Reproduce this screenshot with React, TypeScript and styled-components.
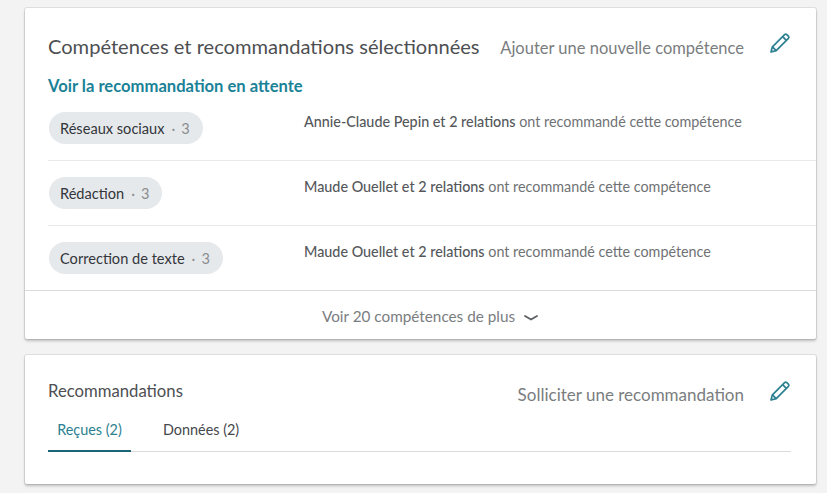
import React from "react";
import styled, { createGlobalStyle } from "styled-components";

const Global = createGlobalStyle`
  html, body { margin: 0; padding: 0; background: #f3f3f3; }
  body { font-family: "Lato", "Open Sans", sans-serif; }
  #root { width: 827px; height: 493px; overflow: hidden; }
`;

const Page = styled.div`
  display: flex;
  flex-direction: column;
  gap: 16px;
  padding: 8px 11px 0 25px;
`;

const Card = styled.section`
  width: 791px;
  box-sizing: border-box;
  background: #fff;
  border-radius: 2px;
  box-shadow: 0 0 0 1px rgba(0, 0, 0, 0.08), 0 2px 3px rgba(0, 0, 0, 0.22);
`;

const Header = styled.header<{ $top: number; $height: number }>`
  display: flex;
  align-items: center;
  box-sizing: border-box;
  height: ${(p) => p.$height}px;
  padding: ${(p) => p.$top}px 25px 0 23px;
`;

const Title = styled.h2<{ $size: number; $lift: number }>`
  margin: 0 0 ${(p) => p.$lift}px;
  flex: 1;
  font-size: ${(p) => p.$size}px;
  font-weight: 400;
  color: #4d4f52;
  white-space: nowrap;
`;

const AddLabel = styled.span<{ $size: number; $drop: number }>`
  font-size: ${(p) => p.$size}px;
  color: #7a7d80;
  margin: ${(p) => p.$drop}px 25px 0 0;
  white-space: nowrap;
`;

const PencilSlot = styled.span<{ $lift: number }>`
  display: flex;
  margin-bottom: ${(p) => p.$lift}px;
`;

const PendingLink = styled.a`
  display: block;
  margin: 0 0 0 23px;
  height: 20px;
  line-height: 20px;
  font-size: 16.6px;
  font-weight: 700;
  color: #1a8297;
`;

const SkillRow = styled.div<{ $inset: boolean }>`
  display: flex;
  align-items: flex-start;
  height: 65px;
  box-sizing: border-box;
  padding-top: 16px;
  margin-left: ${(p) => (p.$inset ? 23 : 0)}px;
  padding-left: ${(p) => (p.$inset ? 0 : 23)}px;
  border-bottom: 1px solid ${(p) => (p.$inset ? "#e8e9ea" : "#d9dadb")};
`;

const SkillCell = styled.div`
  width: 256px;
  flex: none;
`;

const Pill = styled.span`
  display: inline-flex;
  align-items: center;
  height: 32px;
  margin-left: 1px;
  padding: 0 13px 0 11px;
  border-radius: 16px;
  background: #e6e9ec;
  font-size: 14.6px;
  color: #33363a;
  white-space: nowrap;
`;

const Count = styled.span`
  color: #8b8e91;
  margin-left: 7px;
  &::before { content: "·"; margin-right: 6px; }
`;

const Endorsement = styled.p`
  margin: 0;
  line-height: 20px;
  font-size: 14.35px;
  color: #6f7275;
  white-space: nowrap;
`;

const Strong = styled.span`
  color: #55585b;
  font-weight: 500;
`;

const Footer = styled.button`
  display: flex;
  align-items: center;
  justify-content: center;
  gap: 8px;
  box-sizing: border-box;
  width: 100%;
  height: 48px;
  padding: 1px 0 0 20px;
  border: 0;
  background: none;
  font-family: inherit;
  font-size: 15.3px;
  color: #7a7d80;
`;

const ChevronSlot = styled.span`
  display: flex;
  margin-top: 4px;
`;

const Tabs = styled.nav`
  display: flex;
  margin: 2px 25px 0 23px;
  height: 35px;
  box-sizing: border-box;
  border-bottom: 1px solid #d9dadb;
`;

const Tab = styled.a<{ $active?: boolean }>`
  box-sizing: border-box;
  width: ${(p) => (p.$active ? 83 : 110)}px;
  height: 35px;
  padding: 0 ${(p) => (p.$active ? 8 : 32)}px;
  line-height: 26px;
  font-size: 14.4px;
  white-space: nowrap;
  color: ${(p) => (p.$active ? "#2c7f91" : "#45484b")};
  text-align: ${(p) => (p.$active ? "center" : "left")};
  border-bottom: ${(p) => (p.$active ? "2px solid #1c6478" : "none")};
`;

const Spacer = styled.div`
  height: 32px;
`;

const Pencil = () => (
  <svg width="22" height="22" viewBox="0 0 22 22" fill="none" stroke="#2c7f91" strokeWidth="1.7" strokeLinejoin="round">
    <path d="M2 20l1.4-5.2L15.6 2.6a1.6 1.6 0 0 1 2.2 0l1.6 1.6a1.6 1.6 0 0 1 0 2.2L7.2 18.6 2 20z" />
    <path d="M13.6 4.6l3.8 3.8M3.4 14.8l3.8 3.8" />
  </svg>
);

const Chevron = () => (
  <svg width="16" height="8" viewBox="0 0 16 8" fill="none" stroke="#5e6164" strokeWidth="1.8" strokeLinecap="round" strokeLinejoin="round">
    <path d="M2 2l6 3.6L14 2" />
  </svg>
);

const skills = [
  { name: "Réseaux sociaux", who: "Annie-Claude Pepin et 2 relations" },
  { name: "Rédaction", who: "Maude Ouellet et 2 relations" },
  { name: "Correction de texte", who: "Maude Ouellet et 2 relations" },
];

export default function App() {
  return (
    <>
      <Global />
      <Page>
        <Card>
          <Header $top={10} $height={68}>
            <Title $size={20.1} $lift={2}>Compétences et recommandations sélectionnées</Title>
            <AddLabel $size={16.5} $drop={2}>Ajouter une nouvelle compétence</AddLabel>
            <PencilSlot $lift={8}>
              <Pencil />
            </PencilSlot>
          </Header>
          <PendingLink>Voir la recommandation en attente</PendingLink>
          {skills.map((s, i) => (
            <SkillRow key={s.name} $inset={i < 2}>
              <SkillCell>
                <Pill>
                  {s.name}
                  <Count>3</Count>
                </Pill>
              </SkillCell>
              <Endorsement>
                <Strong>{s.who}</Strong> ont recommandé cette compétence
              </Endorsement>
            </SkillRow>
          ))}
          <Footer>
            Voir 20 compétences de plus
            <ChevronSlot>
              <Chevron />
            </ChevronSlot>
          </Footer>
        </Card>
        <Card>
          <Header $top={12} $height={60}>
            <Title $size={16.7} $lift={0}>Recommandations</Title>
            <AddLabel $size={17} $drop={6}>Solliciter une recommandation</AddLabel>
            <PencilSlot $lift={0}>
              <Pencil />
            </PencilSlot>
          </Header>
          <Tabs>
            <Tab $active>Reçues (2)</Tab>
            <Tab>Données (2)</Tab>
          </Tabs>
          <Spacer />
        </Card>
      </Page>
    </>
  );
}
